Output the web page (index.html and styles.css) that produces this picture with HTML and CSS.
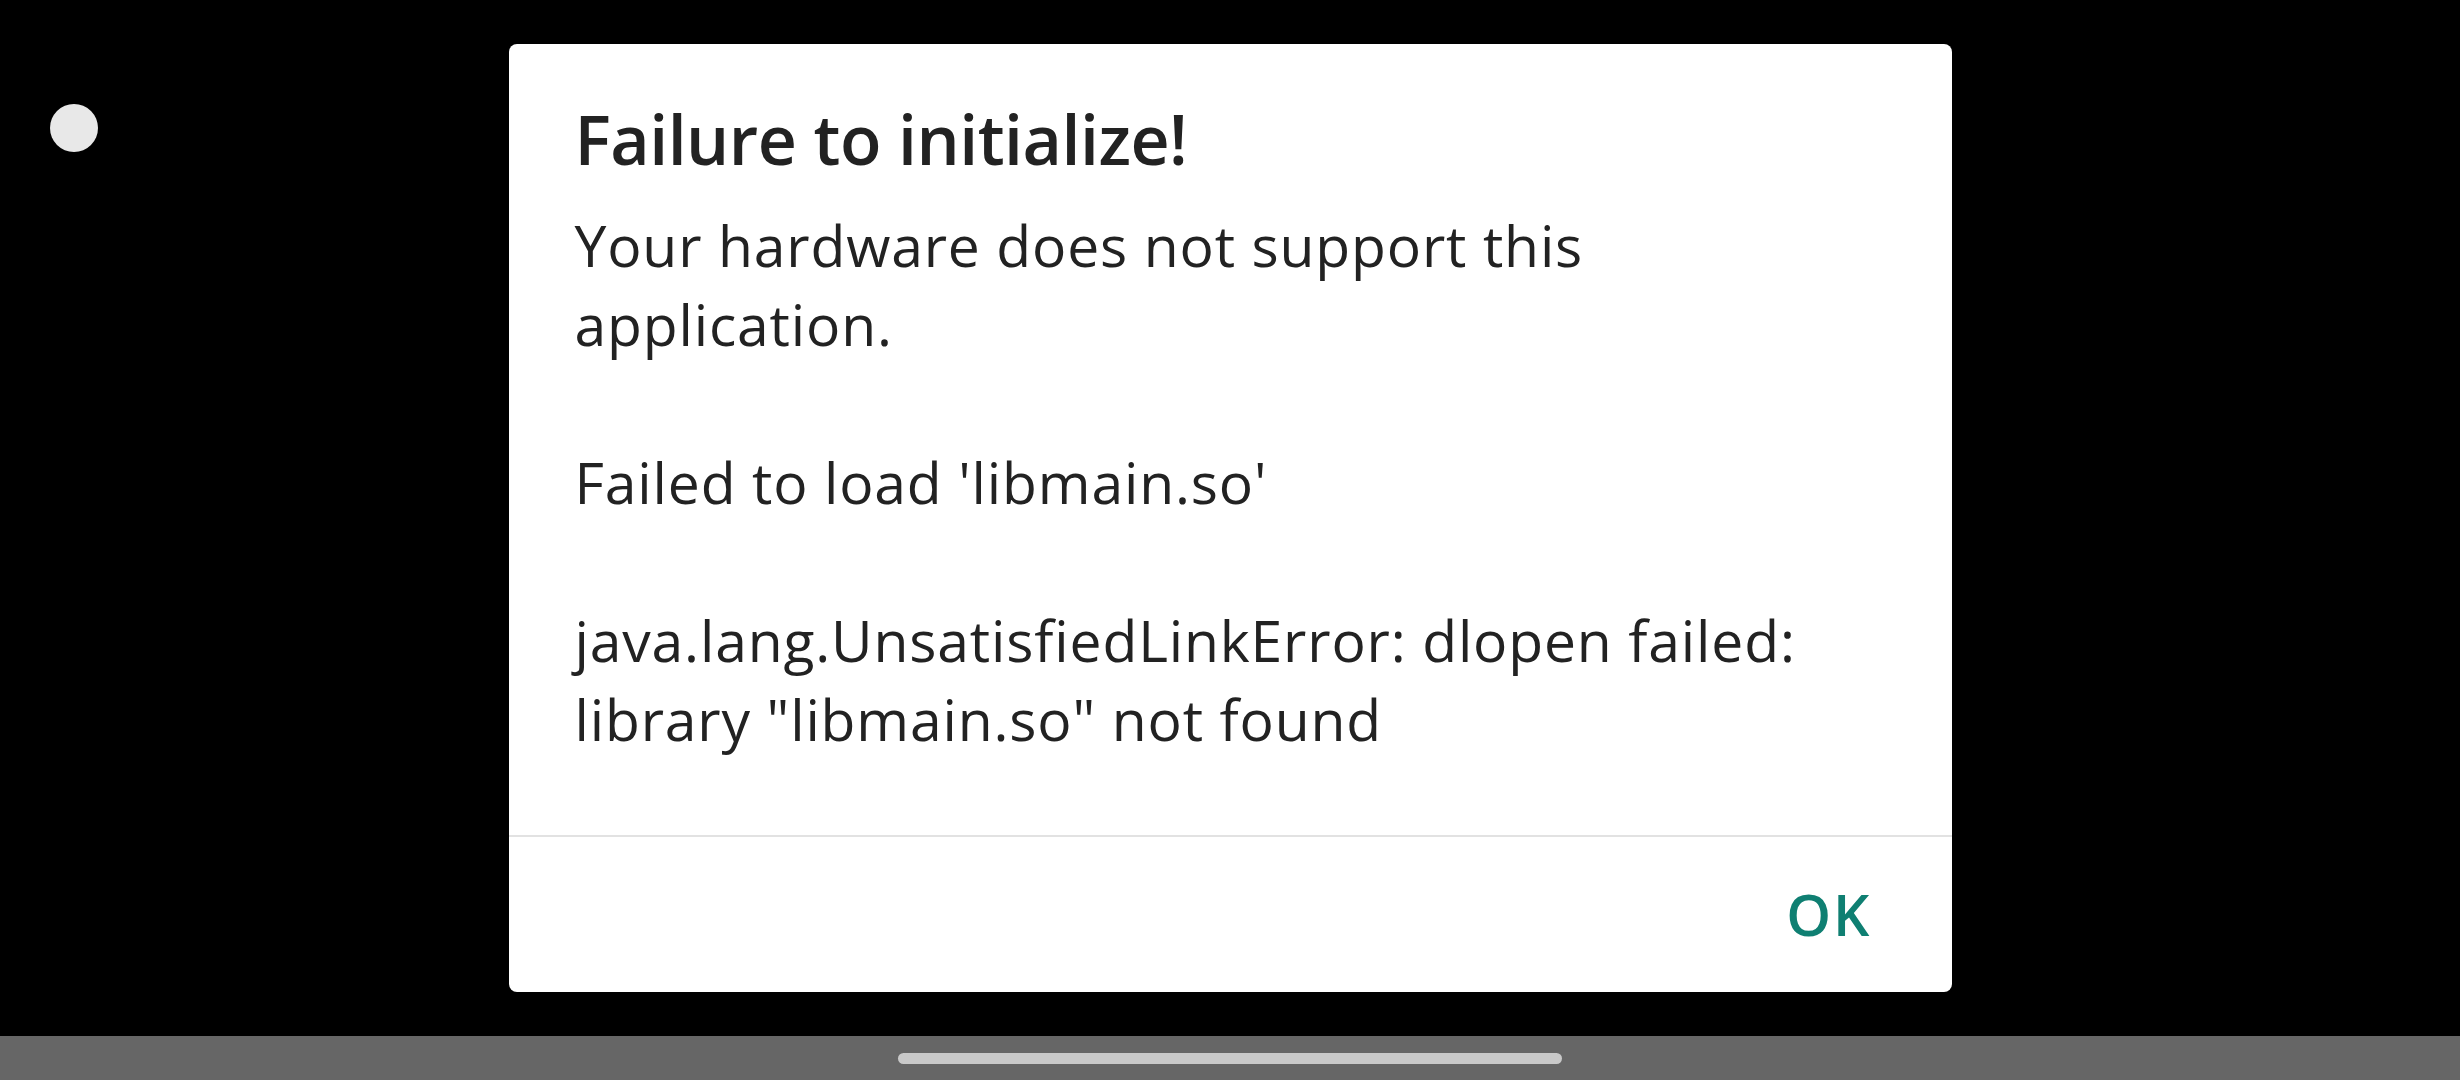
FILE: index.html
```html
<!DOCTYPE html>
<html lang="en">
<head>
    <meta charset="UTF-8">
    <meta name="viewport" content="width=device-width, initial-scale=1.0">
    <title>Failure to initialize!</title>
    <link rel="stylesheet" href="styles.css">
</head>
<body>
    <div class="screen">
        <div class="touch-dot"></div>
        <div class="dialog">
            <div class="dialog-body">
                <h1 class="dialog-title">Failure to initialize!</h1>
                <p class="dialog-message">Your hardware does not support this application.

Failed to load 'libmain.so'

java.lang.UnsatisfiedLinkError: dlopen failed: library "libmain.so" not found</p>
            </div>
            <div class="dialog-buttons">
                <button class="btn-ok" type="button">OK</button>
            </div>
        </div>
    </div>
    <div class="nav-bar">
        <div class="nav-handle"></div>
    </div>
</body>
</html>
```

FILE: styles.css
```css
body {
    margin: 0;
    width: 2460px;
    height: 1080px;
    background-color: #000;
    font-family: "Open Sans", "Liberation Sans", sans-serif;
    color: #222;
    display: flex;
    flex-direction: column;
    overflow: hidden;
}
.screen {
    position: relative;
    height: 1036px;
    display: flex;
    justify-content: center;
    align-items: center;
}
/* floating indicator on the left edge */
.touch-dot {
    position: absolute;
    left: 50px;
    top: 104px;
    width: 48px;
    height: 48px;
    border-radius: 50%;
    background-color: #e8e8e8;
}
.dialog {
    width: 1443px;
    height: 948px;
    background-color: #fff;
    border-radius: 8px;
    display: flex;
    flex-direction: column;
}
.dialog-body {
    padding: 50px 66px 0 66px;
    height: 741px;
    border-bottom: 2px solid #e2e2e2;
}
.dialog-title {
    margin: 0;
    font-size: 68px;
    line-height: 90px;
    font-weight: 600;
    letter-spacing: -0.5px;
}
.dialog-message {
    margin: 22px 0 0 0;
    font-size: 57px;
    line-height: 79px;
    letter-spacing: 0.85px;
    white-space: pre-line;
}
.dialog-buttons {
    display: flex;
    justify-content: flex-end;
    padding: 38px 80px 0 0;
}
.btn-ok {
    border: none;
    background: none;
    padding: 0;
    font-family: inherit;
    font-size: 57px;
    line-height: 79px;
    font-weight: 600;
    color: #0f7f72;
    letter-spacing: 2px;
}
.nav-bar {
    height: 44px;
    background-color: #666;
    display: flex;
    justify-content: center;
    align-items: center;
}
.nav-handle {
    width: 664px;
    height: 11px;
    border-radius: 6px;
    background-color: #c9c9c9;
}
```
